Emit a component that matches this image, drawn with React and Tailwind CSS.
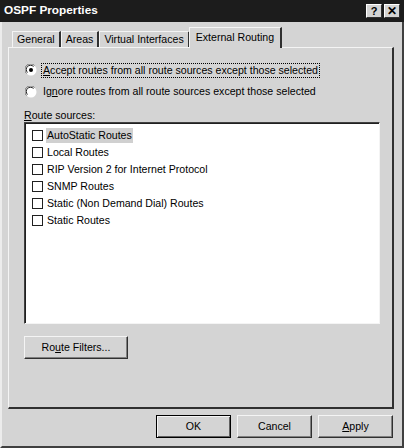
const font = { fontFamily: '"Liberation Sans", Arial, sans-serif' };

function Radio({ checked }) {
  return (
    <svg width="12" height="12" viewBox="0 0 12 12" className="shrink-0">
      <circle cx="6" cy="6" r="5.5" fill="#ffffff" />
      <path d="M1.5 9.5 A5.5 5.5 0 0 1 9.5 1.5" stroke="#707070" strokeWidth="1" fill="none" />
      <path d="M2.5 8.5 A4.2 4.2 0 0 1 8.5 2.5" stroke="#202020" strokeWidth="1" fill="none" />
      {checked && <circle cx="6" cy="6" r="2" fill="#000000" />}
    </svg>
  );
}

function Check() {
  return <span className="w-[11px] h-[11px] shrink-0 border border-[#202020] bg-white" />;
}

function Btn({ children, def, w = "w-[75px]" }) {
  return (
    <button
      className={`${w} h-[23px] bg-[#d4d4d4] text-[10.6px] text-black flex items-center justify-center ${
        def ? "border border-black shadow-[inset_1px_1px_0_#f4f4f4,inset_-1px_-1px_0_#606060]" : "border border-t-[#f4f4f4] border-l-[#f4f4f4] border-r-[#303030] border-b-[#303030] shadow-[inset_-1px_-1px_0_#808080]"
      }`}
    >
      {children}
    </button>
  );
}

export default function App() {
  const sources = [
    "AutoStatic Routes",
    "Local Routes",
    "RIP Version 2 for Internet Protocol",
    "SNMP Routes",
    "Static (Non Demand Dial) Routes",
    "Static Routes",
  ];

  return (
    <div style={font} className="w-[404px] h-[448px] bg-[#d4d4d4] flex flex-col overflow-hidden text-[10.6px] text-black">
      {/* title bar */}
      <div className="h-[22px] bg-[#1c1c1c] flex items-center justify-between pl-[4px] pr-[4px] shrink-0">
        <span className="text-white font-bold text-[11.8px]">OSPF Properties</span>
        <div className="flex gap-[2px]">
          <span className="w-[16px] h-[14px] bg-[#d4d4d4] border border-t-white border-l-white border-r-[#303030] border-b-[#303030] flex items-center justify-center font-bold text-[11px] leading-none">?</span>
          <span className="w-[16px] h-[14px] bg-[#d4d4d4] border border-t-white border-l-white border-r-[#303030] border-b-[#303030] flex items-center justify-center font-bold text-[12px] leading-none">✕</span>
        </div>
      </div>

      <div className="flex-1 flex flex-col border-l-2 border-l-[#ececec] border-r-2 border-r-[#404040] border-b-2 border-b-[#404040] pl-[6px] pr-[8px]">
        {/* tabs */}
        <div className="flex items-end h-[24px] pl-[4px] mt-[1px]">
          {["General", "Areas", "Virtual Interfaces"].map((t) => (
            <div key={t} className="h-[17px] px-[4px] flex items-center whitespace-nowrap border-t border-l border-t-[#f4f4f4] border-l-[#f4f4f4] border-r-2 border-r-[#303030] mb-[-1px] bg-[#d4d4d4]">
              {t}
            </div>
          ))}
          <div className="relative z-10 h-[21px] px-[6px] flex items-start pt-[2px] whitespace-nowrap border-t border-l border-t-[#f4f4f4] border-l-[#f4f4f4] border-r-2 border-r-[#303030] bg-[#d4d4d4] mb-[-1px] ml-[-1px]">
            External Routing
          </div>
        </div>

        {/* panel */}
        <div className="h-[362px] border border-t-[#f4f4f4] border-l-[#f4f4f4] border-r-2 border-b-2 border-r-[#303030] border-b-[#303030] pl-[15px] pr-[12px] pt-[15px] flex flex-col">
          <div className="flex items-center gap-[4px] h-[14px]">
            <span className="ml-[1px]"><Radio checked /></span>
            <span className="border border-dotted border-black px-[1px] leading-[13px] whitespace-nowrap">
              <u>A</u>ccept routes from all route sources except those selected
            </span>
          </div>
          <div className="flex items-center gap-[4px] h-[14px] mt-[8px]">
            <span className="ml-[1px]"><Radio /></span>
            <span className="px-[2px] whitespace-nowrap">
              Ig<u>n</u>ore routes from all route sources except those selected
            </span>
          </div>
          <div className="mt-[9px] h-[14px]">
            <u>R</u>oute sources:
          </div>
          <div className="h-[202px] bg-white border border-t-[#404040] border-l-[#404040] border-r-[#f4f4f4] border-b-[#f4f4f4] shadow-[inset_1px_1px_0_#202020] pt-[4px] pl-[7px]">
            {sources.map((s, i) => (
              <div key={s} className="flex items-center h-[17px] gap-[3px]">
                <Check />
                <span className={`px-[1px] leading-[15px] ${i === 0 ? "bg-[#d0d0d0]" : ""}`}>{s}</span>
              </div>
            ))}
          </div>
          <div className="mt-[12px]">
            <Btn w="w-[104px]">
              Ro<u>u</u>te Filters...
            </Btn>
          </div>
        </div>

        {/* footer buttons */}
        <div className="flex justify-end gap-[6px] mt-[6px] pr-[1px]">
          <Btn def>OK</Btn>
          <Btn>Cancel</Btn>
          <Btn>
            <u>A</u>pply
          </Btn>
        </div>
      </div>
    </div>
  );
}
